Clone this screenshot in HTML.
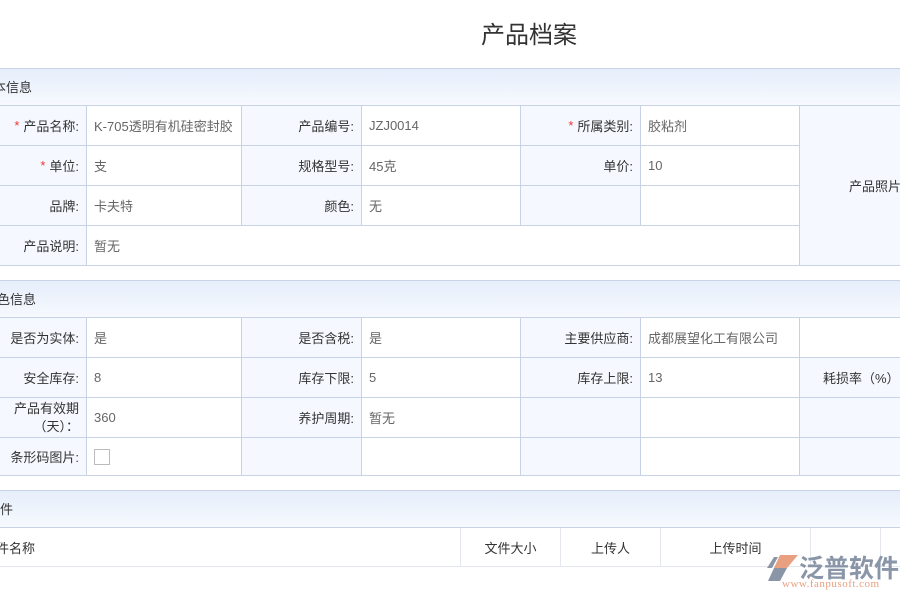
<!DOCTYPE html>
<html><head><meta charset="utf-8"><style>
*{margin:0;padding:0;box-sizing:border-box}
body{width:900px;height:600px;overflow:hidden;background:#fff;position:relative;font-family:"Liberation Sans","Noto Sans CJK SC",sans-serif;font-size:13px;color:#333}
.a{position:absolute;white-space:nowrap}
.h{position:absolute;left:0;width:900px;height:38px;background:linear-gradient(#e6eefb,#f6f9fe);border-top:1px solid #c9d3e6;border-bottom:1px solid #c9d3e6}
.h span{position:absolute;top:8px;font-size:13px;color:#333}
.c{position:absolute;border-right:1px solid #c9d3e6;border-bottom:1px solid #c9d3e6;display:flex;align-items:center;padding:0 7px}
.l{background:#f5f9ff;justify-content:flex-end;color:#333}
.v{background:#fff;color:#666}
.r{color:#e33;margin-right:4px}
.f{position:absolute;border-right:1px solid #e4e8ee;border-bottom:1px solid #e4e8ee;display:flex;align-items:center;justify-content:center;color:#333;top:528px;height:39px}
</style></head><body>
<div class="a" style="left:481px;top:15px;font-size:24px;color:#333">产品档案</div>

<div class="h" style="top:68px"><span style="left:-20px">基本信息</span></div>
<div class="c l" style="left:0;top:106px;width:87px;height:40px"><span class="r">*</span>产品名称:</div>
<div class="c v" style="left:87px;top:106px;width:155px;height:40px">K-705透明有机硅密封胶</div>
<div class="c l" style="left:242px;top:106px;width:120px;height:40px">产品编号:</div>
<div class="c v" style="left:362px;top:106px;width:159px;height:40px">JZJ0014</div>
<div class="c l" style="left:521px;top:106px;width:120px;height:40px"><span class="r">*</span>所属类别:</div>
<div class="c v" style="left:641px;top:106px;width:159px;height:40px">胶粘剂</div>
<div class="c l" style="left:800px;top:106px;width:120px;height:160px;justify-content:flex-start;padding-left:49px">产品照片</div>

<div class="c l" style="left:0;top:146px;width:87px;height:40px"><span class="r">*</span>单位:</div>
<div class="c v" style="left:87px;top:146px;width:155px;height:40px">支</div>
<div class="c l" style="left:242px;top:146px;width:120px;height:40px">规格型号:</div>
<div class="c v" style="left:362px;top:146px;width:159px;height:40px">45克</div>
<div class="c l" style="left:521px;top:146px;width:120px;height:40px">单价:</div>
<div class="c v" style="left:641px;top:146px;width:159px;height:40px">10</div>

<div class="c l" style="left:0;top:186px;width:87px;height:40px">品牌:</div>
<div class="c v" style="left:87px;top:186px;width:155px;height:40px">卡夫特</div>
<div class="c l" style="left:242px;top:186px;width:120px;height:40px">颜色:</div>
<div class="c v" style="left:362px;top:186px;width:159px;height:40px">无</div>
<div class="c l" style="left:521px;top:186px;width:120px;height:40px"></div>
<div class="c v" style="left:641px;top:186px;width:159px;height:40px"></div>

<div class="c l" style="left:0;top:226px;width:87px;height:40px">产品说明:</div>
<div class="c v" style="left:87px;top:226px;width:713px;height:40px">暂无</div>

<div class="h" style="top:280px"><span style="left:-16px">特色信息</span></div>
<div class="c l" style="left:0;top:318px;width:87px;height:40px">是否为实体:</div>
<div class="c v" style="left:87px;top:318px;width:155px;height:40px">是</div>
<div class="c l" style="left:242px;top:318px;width:120px;height:40px">是否含税:</div>
<div class="c v" style="left:362px;top:318px;width:159px;height:40px">是</div>
<div class="c l" style="left:521px;top:318px;width:120px;height:40px">主要供应商:</div>
<div class="c v" style="left:641px;top:318px;width:159px;height:40px">成都展望化工有限公司</div>
<div class="c v" style="left:800px;top:318px;width:120px;height:40px"></div>

<div class="c l" style="left:0;top:358px;width:87px;height:40px">安全库存:</div>
<div class="c v" style="left:87px;top:358px;width:155px;height:40px">8</div>
<div class="c l" style="left:242px;top:358px;width:120px;height:40px">库存下限:</div>
<div class="c v" style="left:362px;top:358px;width:159px;height:40px">5</div>
<div class="c l" style="left:521px;top:358px;width:120px;height:40px">库存上限:</div>
<div class="c v" style="left:641px;top:358px;width:159px;height:40px">13</div>
<div class="c l" style="left:800px;top:358px;width:120px;height:40px;justify-content:flex-start;padding-left:23px">耗损率（%）</div>

<div class="c l" style="left:0;top:398px;width:87px;height:40px;text-align:right;line-height:18px;white-space:normal"><div>产品有效期<br>（天）：</div></div>
<div class="c v" style="left:87px;top:398px;width:155px;height:40px">360</div>
<div class="c l" style="left:242px;top:398px;width:120px;height:40px">养护周期:</div>
<div class="c v" style="left:362px;top:398px;width:159px;height:40px">暂无</div>
<div class="c l" style="left:521px;top:398px;width:120px;height:40px"></div>
<div class="c v" style="left:641px;top:398px;width:159px;height:40px"></div>
<div class="c l" style="left:800px;top:398px;width:120px;height:40px"></div>

<div class="c l" style="left:0;top:438px;width:87px;height:38px">条形码图片:</div>
<div class="c v" style="left:87px;top:438px;width:155px;height:38px"><div style="width:16px;height:16px;border:1px solid #bbb"></div></div>
<div class="c l" style="left:242px;top:438px;width:120px;height:38px"></div>
<div class="c v" style="left:362px;top:438px;width:159px;height:38px"></div>
<div class="c l" style="left:521px;top:438px;width:120px;height:38px"></div>
<div class="c v" style="left:641px;top:438px;width:159px;height:38px"></div>
<div class="c l" style="left:800px;top:438px;width:120px;height:38px"></div>

<div class="h" style="top:490px"><span style="left:-13px">附件</span></div>
<div class="f" style="left:0;width:461px;justify-content:flex-start;padding-left:0"><span style="margin-left:-17px">文件名称</span></div>
<div class="f" style="left:461px;width:100px">文件大小</div>
<div class="f" style="left:561px;width:100px">上传人</div>
<div class="f" style="left:661px;width:150px">上传时间</div>
<div class="f" style="left:811px;width:70px"></div>
<div class="f" style="left:881px;width:40px"></div>

<svg class="a" style="left:766px;top:554px" width="34" height="28" viewBox="0 0 34 28">
<path d="M14 1 L32 1 L21 14 L8 14 Z" fill="#e8a080"/>
<path d="M8 14 L21 14 L14 27 L2 27 Z" fill="#8a96a8"/>
<path d="M1 14 L8 3 L12 3 L6 14 Z" fill="#8a96a8"/>
</svg>
<div class="a" style="left:799px;top:549px;font-size:25px;color:#8a96a8;font-weight:bold;letter-spacing:0px">泛普软件</div>
<div class="a" style="left:782px;top:578px;font-size:11px;color:#e8a080;font-family:'Liberation Serif',serif;letter-spacing:0.5px">www.fanpusoft.com</div>
</body></html>
